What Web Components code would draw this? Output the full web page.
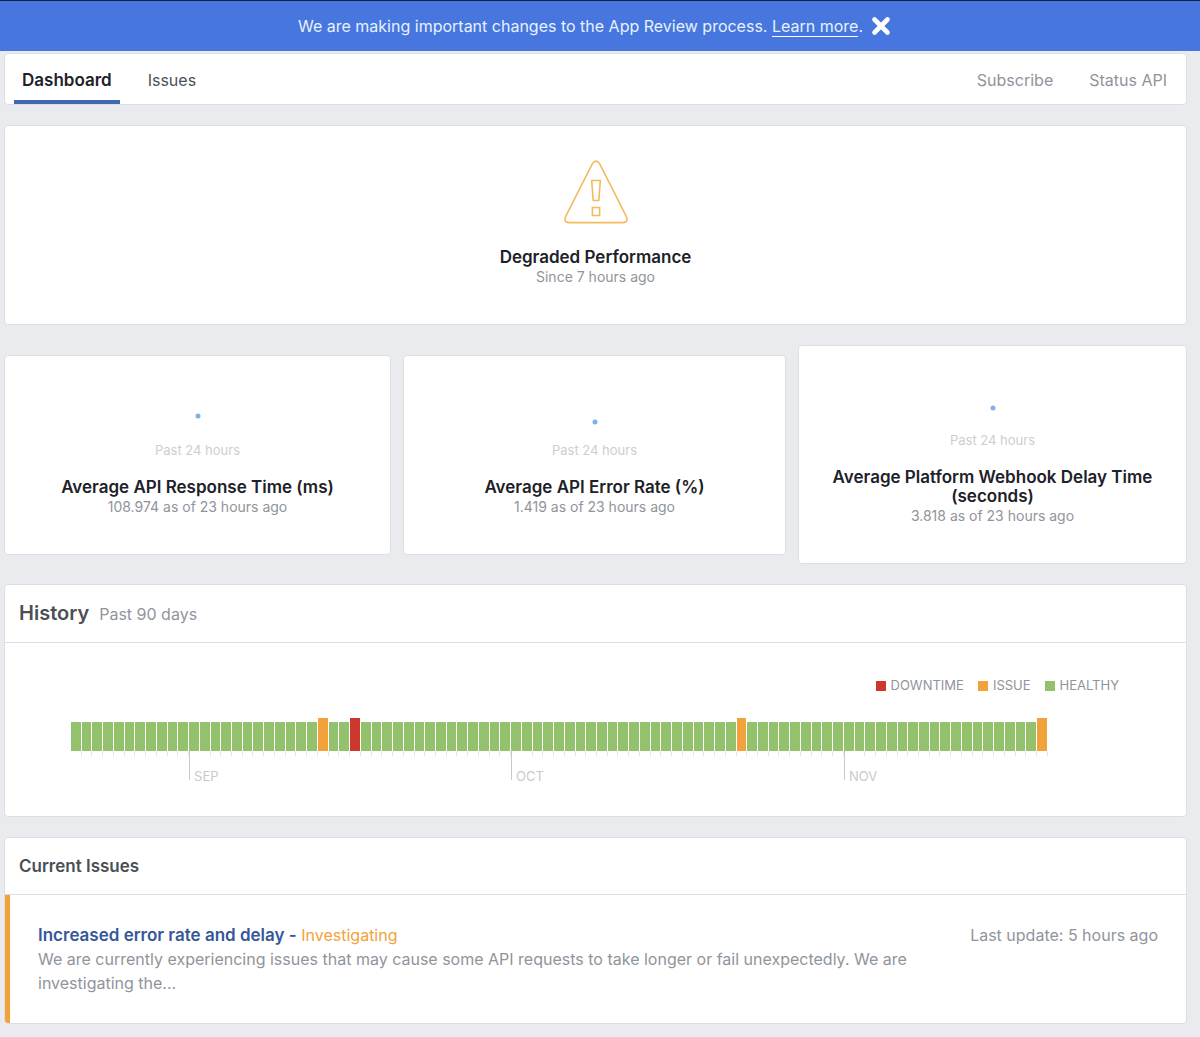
<!DOCTYPE html>
<html lang="en">
<head>
<meta charset="utf-8">
<meta name="viewport" content="width=device-width, initial-scale=1">
<title>Platform Status</title>
<style>
body {
    margin: 0;
    background-color: #e9ebee;
    color: #1d2129;
    font-family: Inter, "Liberation Sans", sans-serif;
    font-size: 16px;
}
</style>
</head>
<body>
<status-page>
    <notice-banner slot="banner">We are making important changes to the App Review process.</notice-banner>
    <status-nav></status-nav>
    <status-summary since="Since 7 hours ago">Degraded Performance</status-summary>
    <metric-row>
        <metric-card value="108.974 as of 23 hours ago" level="23">Average API Response Time (ms)</metric-card>
        <metric-card value="1.419 as of 23 hours ago" level="29">Average API Error Rate (%)</metric-card>
        <metric-card value="3.818 as of 23 hours ago" level="25">Average Platform Webhook Delay Time (seconds)</metric-card>
    </metric-row>
    <status-panel heading="History" size="large">
        <span slot="note">Past 90 days</span>
        <history-chart days="91" issues="23,62,90" downtime="26" months="11:SEP,41:OCT,72:NOV"></history-chart>
    </status-panel>
    <status-panel heading="Current Issues">
        <issue-item heading="Increased error rate and delay -" state="Investigating" updated="Last update: 5 hours ago">We are currently experiencing issues that may cause some API requests to take longer or fail unexpectedly. We are investigating the...</issue-item>
    </status-panel>
</status-page>

<script>
class StatusPage extends HTMLElement {
    constructor() {
        super();
        this.attachShadow({ mode: "open" });
        this.shadowRoot.innerHTML = `
            <style>
:host {
    display: block;
}

main {
    display: flex;
    flex-direction: column;
    gap: 20px;
    padding: 2px 13px 13px 4px;
}
            </style>
            <slot name="banner"></slot>
            <main><slot></slot></main>
        `;
    }
}

class NoticeBanner extends HTMLElement {
    constructor() {
        super();
        this.attachShadow({ mode: "open" });
        this.shadowRoot.innerHTML = `
            <style>
:host {
    display: flex;
    align-items: center;
    justify-content: center;
    gap: 8px;
    min-height: 50px;
    padding: 0 11px 0 0;
    border-top: 1px solid #14213f;
    background-color: #4676de;
    color: #e6f2ff;
    line-height: 20px;
}

p {
    margin: 0;
}

a {
    color: inherit;
    text-decoration: none;
    border-bottom: 1px solid #fff;
}

button {
    display: flex;
    padding: 0;
    border: 0;
    background: none;
    cursor: pointer;
}
            </style>
            <p><slot></slot> <a href="#review">Learn more</a>.</p>
            <button type="button" aria-label="Close">
                <svg width="20" height="20" viewBox="0 0 20 20">
                    <path d="M3.5 3.5l13 13M16.5 3.5l-13 13" stroke="#fff" stroke-width="4.6" stroke-linecap="round"/>
                </svg>
            </button>
        `;
    }
    connectedCallback() {
        const button = this.shadowRoot.querySelector("button");
        button.addEventListener("click", () => this.remove());
    }
}

class StatusNav extends HTMLElement {
    constructor() {
        super();
        this.attachShadow({ mode: "open" });
        this.shadowRoot.innerHTML = `
            <style>
:host {
    display: block;
}

nav {
    display: flex;
    justify-content: space-between;
    padding: 0 11px 0 9px;
    border: 1px solid #dddfe2;
    border-radius: 4px;
    background-color: #fff;
}

div {
    display: flex;
    gap: 20px;
}

a {
    box-sizing: border-box;
    height: 50px;
    padding: 16px 8px 0;
    color: #4b4f56;
    line-height: 20px;
    text-decoration: none;
}

.active {
    color: #1d2129;
    font-size: 17px;
    font-weight: 600;
    border-bottom: 4px solid #4267b2;
}

.side a {
    color: #90949c;
}
            </style>
            <nav>
                <div>
                    <a class="active" href="#dashboard" aria-current="page">Dashboard</a>
                    <a href="#issues">Issues</a>
                </div>
                <div class="side">
                    <a href="#subscribe">Subscribe</a>
                    <a href="#api">Status API</a>
                </div>
            </nav>
        `;
    }
}

class StatusSummary extends HTMLElement {
    constructor() {
        super();
        this.attachShadow({ mode: "open" });
        this.shadowRoot.innerHTML = `
            <style>
:host {
    display: flex;
    flex-direction: column;
    align-items: center;
    padding: 34px 16px 38px;
    border: 1px solid #dddfe2;
    border-radius: 4px;
    background-color: #fff;
    text-align: center;
}

svg {
    margin-bottom: 24px;
}

h2, p {
    margin: 0;
    line-height: 19px;
}

h2 {
    font-size: 17px;
    font-weight: 600;
}

p {
    color: #90949c;
    font-size: 14px;
}
            </style>
            <svg width="64" height="64" viewBox="0 0 64 64" fill="none" stroke="#f5b95f" stroke-width="1.6" aria-hidden="true">
                <path d="M28.4 3.6Q32 -1.4 35.6 3.6L62.4 56.6Q64.6 62.4 59 62.6H5Q-.6 62.4 1.6 56.6Z"/>
                <path d="M27.7 20.5h8.6L34.8 40.5h-5.6zM28.4 47.5h7.2v8h-7.2z"/>
            </svg>
            <h2><slot></slot></h2>
            <p></p>
        `;
    }
    connectedCallback() {
        this.shadowRoot.querySelector("p").textContent = this.getAttribute("since");
    }
}

class MetricRow extends HTMLElement {
    constructor() {
        super();
        this.attachShadow({ mode: "open" });
        this.shadowRoot.innerHTML = `
            <style>
:host {
    display: grid;
    grid-template-columns: 387fr 383fr 389fr;
    align-items: center;
    gap: 12px;
}
            </style>
            <slot></slot>
        `;
    }
}

class MetricCard extends HTMLElement {
    constructor() {
        super();
        this.attachShadow({ mode: "open" });
        this.shadowRoot.innerHTML = `
            <style>
:host {
    display: flex;
    flex-direction: column;
    align-items: center;
    padding: 37px 24px 38px;
    border: 1px solid #dddfe2;
    border-radius: 4px;
    background-color: #fff;
    text-align: center;
}

span {
    margin-bottom: 19px;
    color: #ccced2;
    font-size: 13px;
    line-height: 18px;
}

h3, p {
    margin: 0;
    line-height: 19px;
}

h3 {
    font-size: 17px;
    font-weight: 600;
}

p {
    color: #90949c;
    font-size: 14px;
}
            </style>
            <svg width="120" height="48" viewBox="0 0 120 48" aria-hidden="true">
                <circle cx="60" r="2.5" fill="#7fb0e6"/>
            </svg>
            <span>Past 24 hours</span>
            <h3><slot></slot></h3>
            <p></p>
        `;
    }
    connectedCallback() {
        this.shadowRoot.querySelector("circle").setAttribute("cy", this.getAttribute("level"));
        this.shadowRoot.querySelector("p").textContent = this.getAttribute("value");
    }
}

class StatusPanel extends HTMLElement {
    constructor() {
        super();
        this.attachShadow({ mode: "open" });
        this.shadowRoot.innerHTML = `
            <style>
:host {
    display: block;
    overflow: hidden;
    border: 1px solid #dddfe2;
    border-radius: 4px;
    background-color: #fff;
}

header {
    display: flex;
    align-items: baseline;
    gap: 10px;
    padding: 16px 14px;
    border-bottom: 1px solid #dddfe2;
    color: #90949c;
    line-height: 24px;
}

h2 {
    margin: 0;
    color: #4b4f56;
    font-size: 17px;
    font-weight: 600;
}

:host([size="large"]) h2 {
    font-size: 20px;
}
            </style>
            <header><h2></h2><slot name="note"></slot></header>
            <slot></slot>
        `;
    }
    connectedCallback() {
        this.shadowRoot.querySelector("h2").textContent = this.getAttribute("heading");
    }
}

class HistoryChart extends HTMLElement {
    constructor() {
        super();
        this.attachShadow({ mode: "open" });
        this.shadowRoot.innerHTML = `
            <style>
:host {
    display: block;
    padding: 34px 67px 36px 66px;
    --downtime: #cc372e;
    --issue: #f2a23a;
    --healthy: #93c16c;
}

ul {
    display: flex;
    justify-content: flex-end;
    gap: 14px;
    margin: 0 0 24px;
    padding: 0;
    list-style: none;
    color: #90949c;
    font-size: 13px;
    line-height: 17px;
}

li {
    display: flex;
    align-items: center;
    gap: 5px;
}

li i {
    width: 10px;
    height: 10px;
}

.downtime {
    background-color: var(--downtime);
}

.issue {
    background-color: var(--issue);
}

.healthy {
    background-color: var(--healthy);
}

.days {
    display: flex;
    align-items: flex-end;
    margin-right: 71px;
}

.day {
    flex: 1 1 0;
    min-width: 0;
}

.bar {
    height: 33px;
    margin-right: 1px;
}

.bar.healthy {
    height: 29px;
}

.tick {
    box-sizing: border-box;
    height: 5px;
    margin-bottom: 24px;
    border-right: 1px solid #e3e5e8;
}

.tick.month {
    display: flex;
    align-items: flex-end;
    height: 29px;
    margin-bottom: 0;
    border-right: 0;
    border-left: 1px solid #c8cacd;
    padding-left: 4px;
    color: #c8cacd;
    font-size: 13px;
    line-height: 8px;
}
            </style>
            <ul>
                <li><i class="downtime"></i>DOWNTIME</li>
                <li><i class="issue"></i>ISSUE</li>
                <li><i class="healthy"></i>HEALTHY</li>
            </ul>
            <div class="days"></div>
        `;
    }
    connectedCallback() {
        const issues = this.getAttribute("issues").split(",").map(Number);
        const downtime = this.getAttribute("downtime").split(",").map(Number);
        const months = new Map(this.getAttribute("months").split(",").map((m) => m.split(":")));
        const days = this.shadowRoot.querySelector(".days");

        for (let i = 0; i < Number(this.getAttribute("days")); i++) {
            let state = "healthy";
            if (issues.includes(i)) state = "issue";
            if (downtime.includes(i)) state = "downtime";

            const day = document.createElement("div");
            day.className = "day";
            const bar = document.createElement("div");
            bar.className = "bar " + state;
            const tick = document.createElement("div");
            tick.className = "tick";
            if (months.has(String(i))) {
                tick.classList.add("month");
                tick.textContent = months.get(String(i));
            }
            day.append(bar, tick);
            days.appendChild(day);
        }
    }
}

class IssueItem extends HTMLElement {
    constructor() {
        super();
        this.attachShadow({ mode: "open" });
        this.shadowRoot.innerHTML = `
            <style>
:host {
    display: flex;
    justify-content: space-between;
    gap: 32px;
    padding: 28px;
    border-left: 5px solid #f2a23a;
    color: #90949c;
    line-height: 24px;
}

article {
    flex: 0 1 900px;
}

h3, p {
    margin: 0;
}

h3 {
    font-size: 16px;
    font-weight: 400;
}

a {
    color: #365899;
    font-size: 17px;
    font-weight: 600;
    text-decoration: none;
}

.state {
    color: #f2a23a;
}

time {
    white-space: nowrap;
}
            </style>
            <article>
                <h3><a href="#issue"></a> <span class="state"></span></h3>
                <p><slot></slot></p>
            </article>
            <time></time>
        `;
    }
    connectedCallback() {
        this.shadowRoot.querySelector("a").textContent = this.getAttribute("heading");
        this.shadowRoot.querySelector(".state").textContent = this.getAttribute("state");
        this.shadowRoot.querySelector("time").textContent = this.getAttribute("updated");
    }
}

customElements.define("status-page", StatusPage);
customElements.define("notice-banner", NoticeBanner);
customElements.define("status-nav", StatusNav);
customElements.define("status-summary", StatusSummary);
customElements.define("metric-row", MetricRow);
customElements.define("metric-card", MetricCard);
customElements.define("status-panel", StatusPanel);
customElements.define("history-chart", HistoryChart);
customElements.define("issue-item", IssueItem);
</script>
</body>
</html>
